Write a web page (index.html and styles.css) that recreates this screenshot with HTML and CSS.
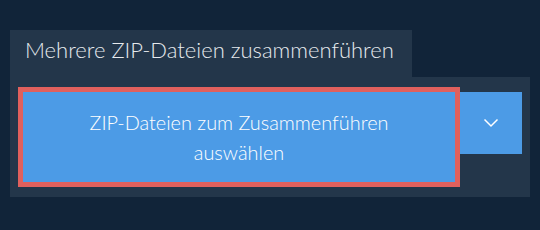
FILE: index.html
```html
<!DOCTYPE html>
<html lang="de">
<head>
<meta charset="utf-8">
<link rel="stylesheet" href="styles.css">
</head>
<body>
<div class="wrap">
  <div class="tab">Mehrere ZIP-Dateien zusammenführen</div>
  <div class="panel">
    <button class="main">ZIP-Dateien zum Zusammenführen<br>auswählen</button>
    <button class="drop" aria-label="Mehr">
      <svg width="16" height="10" viewBox="0 0 16 10"><path d="M1.5 1.5 L8 8 L14.5 1.5" fill="none" stroke="#fff" stroke-width="1.5"/></svg>
    </button>
  </div>
</div>
</body>
</html>
```
FILE: styles.css
```css
html, body { margin: 0; padding: 0; }
body {
  background: #112439;
  width: 540px;
  height: 230px;
  font-family: Lato, "Open Sans", sans-serif;
}
.wrap {
  padding: 30px 10px 0 10px;
}
.tab {
  display: inline-block;
  background: #23364a;
  color: #e6eaee;
  font-size: 22px;
  font-weight: 300;
  height: 47px;
  line-height: 40px;
  padding: 0 0 0 15px;
  box-sizing: border-box;
  width: 402px;
  white-space: nowrap;
}
.panel {
  background: #23364a;
  display: flex;
  align-items: flex-start;
  padding: 10px 8px;
  height: 120px;
  box-sizing: border-box;
}
button {
  font-family: inherit;
  border: none;
  margin: 0;
  cursor: pointer;
}
.main {
  width: 442px;
  height: 100px;
  background: #4c9be6;
  border: 5px solid #e0605d;
  color: #ffffff;
  font-size: 19.9px;
  font-weight: 300;
  line-height: 30px;
  padding: 0;
  box-sizing: border-box;
}
.drop {
  width: 62px;
  height: 62px;
  margin-top: 5px;
  background: #4c9be6;
  display: flex;
  align-items: center;
  justify-content: center;
  padding: 0;
}
.drop svg { display: block; }
```
